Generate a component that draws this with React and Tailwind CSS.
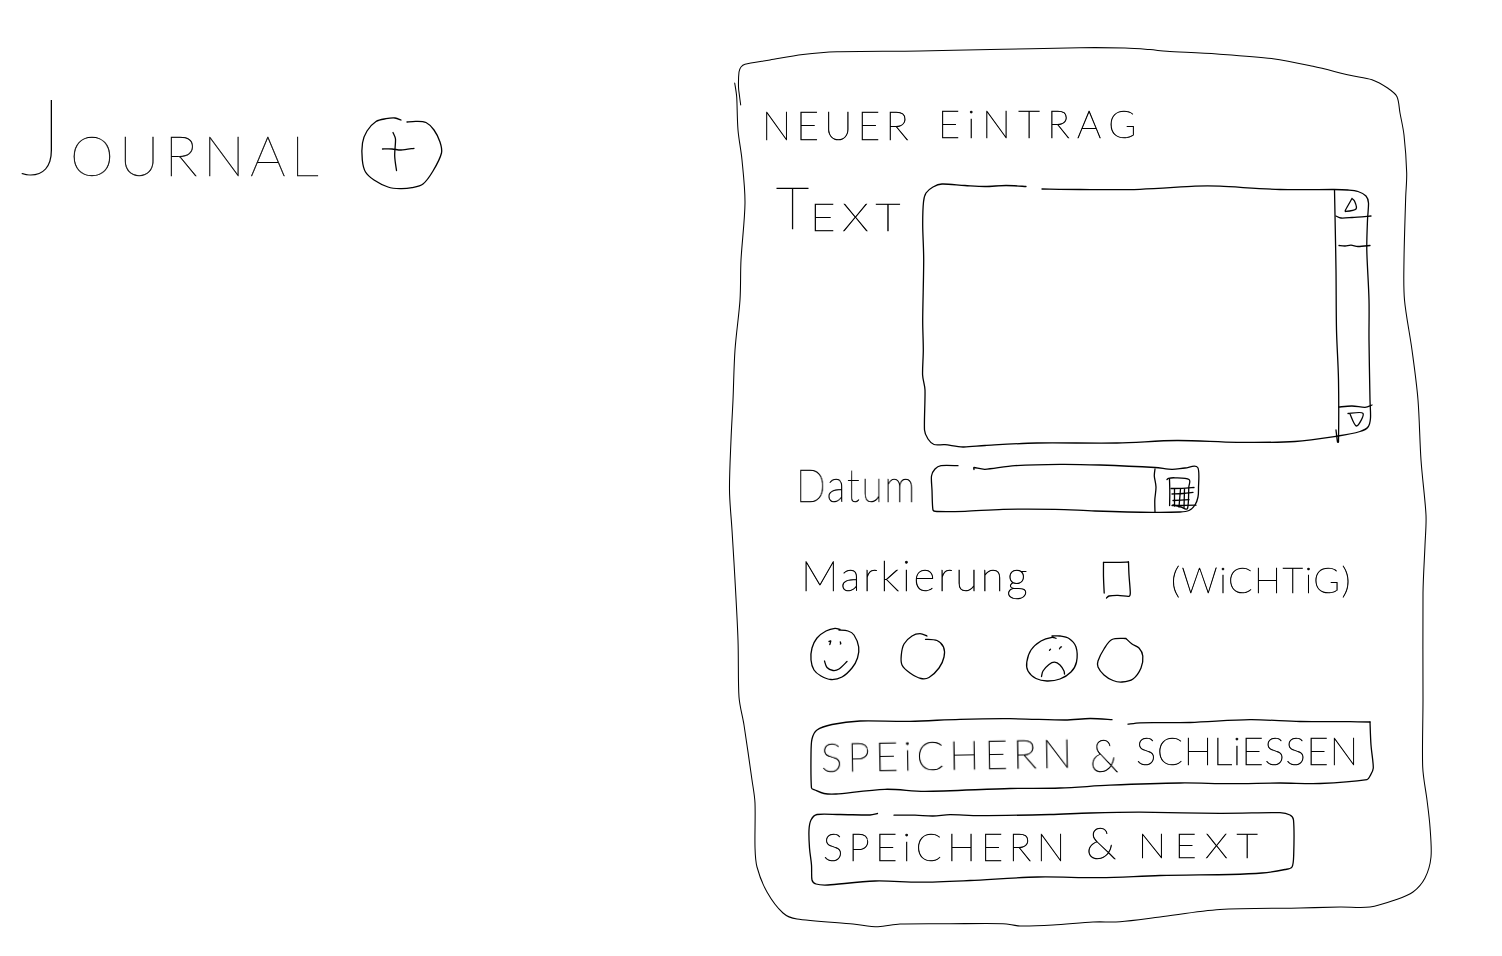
import React from "react";

/* Turns a list of points into a smooth pen line (Catmull-Rom to Bezier). */
function smooth(points) {
  const p = points.trim().split(/\s+/).map((s) => s.split(",").map(Number));
  let d = `M${p[0][0]} ${p[0][1]}`;
  for (let i = 0; i < p.length - 1; i++) {
    const a = p[i - 1] || p[i];
    const b = p[i];
    const c = p[i + 1];
    const e = p[i + 2] || c;
    /* handles never reach past the middle of the segment, so corners stay crisp */
    const len = Math.hypot(c[0] - b[0], c[1] - b[1]);
    const h1 = Math.hypot(c[0] - a[0], c[1] - a[1]) || 1;
    const h2 = Math.hypot(e[0] - b[0], e[1] - b[1]) || 1;
    const k1 = Math.min(1 / 6, (len * 0.33) / h1);
    const k2 = Math.min(1 / 6, (len * 0.33) / h2);
    d += `C${b[0] + (c[0] - a[0]) * k1} ${b[1] + (c[1] - a[1]) * k1} ${c[0] - (e[0] - b[0]) * k2} ${c[1] - (e[1] - b[1]) * k2} ${c[0]} ${c[1]}`;
  }
  return d;
}

function Sketch({ box, lines, width = 1.3, className }) {
  return (
    <svg viewBox={box} className={className} fill="none" stroke="#000" strokeWidth={width} strokeLinecap="round" strokeLinejoin="round" aria-hidden="true">
      {lines.map((l, i) => (
        <path key={i} d={smooth(l)} />
      ))}
    </svg>
  );
}

function Word({ as: Tag = "span", className, children }) {
  return <Tag className={`block shrink-0 origin-left whitespace-nowrap leading-none will-change-transform ${className}`}>{children}</Tag>;
}

const panelFrame = [
  "740.7,105 739.5,96 738.5,87 739,72 741,67 745,64.3 770,60 803,54.5 837,51.7 920,50.9 1003,49.3 1080,47.7 1125,48 1150,49.6 1167,51.3 1217,54 1273,58.7 1313,66.3 1350,75.3 1372,79.7 1388,88.3 1397,96.7 1400,113 1404,135 1406.7,173 1405.7,197 1404,260 1404.5,300 1412,350 1418,400 1421,460 1426,515 1425,545 1423,593 1423,700 1422.7,767 1427,800 1430,827 1431,857 1425,878 1413,892 1395,900 1370,907 1340,907 1300,908 1220,909.5 1160,917 1120,921.7 1093,922 1053,925 1020,926 1003,923.7 950,923.7 900,924 878,926.7 853,924 797,919 783,913 767,892 757,867 755,847 755,803 752,780 744,725 739,697 738,640 735,580 732,530 729.5,490 731,440 733,400 735,350 740,300 741,260 745,203 742,160 738,130 736.7,97 734.7,83",
];

const textFrame = [
  "1026,186.5 1006,185.5 985,186.5 965,185.5 942,184 933,187 926,193 923.5,202 922.7,225 923.7,260 922.7,320 923.3,350 922.6,375 925,390 924.5,430 928,439 934,444.5 945,444.7 963,447 985,445.5 1037,443 1117,443 1177,440.5 1237,442.3 1295,441.5 1338,436 1360,431.5 1368,427 1370.5,418 1370,400 1369,340 1369,300 1366.8,250 1367.5,220 1368.5,203 1366,196 1358,191.5 1348,190 1334,189.5 1280,189.5 1220,186.2 1195,186.2 1140,189.3 1080,189.5 1042,189",
  "1334.5,190 1335,215 1336,270 1336.5,330 1338.5,380 1338.5,442 1337.5,442 1336,430",
  "1336,216 1341,218 1352,217.5 1371,216",
  "1339,245.5 1345,246 1351,245.2 1358,246.5 1370,245.5",
  "1339,407 1352,406 1365,407.3 1372,405",
];

const arrows = [
  "1352,198.5 1345.5,210 1345.5,211.5 1356,209 1354.5,201 1352,198.5",
  "1348,413.5 1363,413.3 1356.5,426 1350,414",
];

const dateFrame = [
  "958,465.7 941,465.7 935,469 931.5,476 932,490 933,510 937,511.5 965,511.3 1003,509.3 1055,509.3 1095,511 1152,512.4 1180,512 1189,510.5 1195,505 1198,497 1198.5,488 1197.7,467.5 1185,468 1172,469.3 1155,467.5 1100,465 1060,464.3 1015,465.7 985,469.3 974,467.5 974,469.5",
  "1155,469 1154.3,476 1156,487 1154.8,500 1155,512",
];

const calendar = [
  "1167,479.5 1168.5,478.3 1175,477.8 1189,479.5 1188.8,487 1187.5,508.5 1181,507 1173,505",
  "1169.5,479 1169.8,492 1169.6,505.5",
  "1171,488.5 1182,488.3 1194,487.5",
  "1172,494 1183,493.5 1193,492.3",
  "1173,500.5 1189,499.7",
  "1172,505.5 1196,505.2",
  "1174.5,489 1174.5,506",
  "1180.5,489 1179,507",
  "1184.5,489 1184,507.5",
];

const checkbox = ["1104.2,593 1103.5,577 1103.5,562.3", "1103.5,562.3 1116,562.4 1128.5,562", "1128.5,562 1129,575 1130.3,593 1129,596.3 1118,595.3 1109,596 1106.5,598"];

const happy = [
  "840,629.5 835,628.3 826,631 817,638 812,648 811,660 814,670 821,676 831,679.5 842,677 852,668 857.5,658 858.7,647 854,635 848,631 839,630",
  "829,641.5 830.8,641 829.8,644.5",
  "840.3,641.8 840.8,643.8 840.3,644",
  "824.5,661 827,667.5 833,670.5 839,669 847,661.5",
];

const radioOne = ["927,636 920,633.7 912,636 904,644 901.3,655 902,665 910,673 921,678.5 929,677.5 939,668 944,657 943.5,647 937,640.5 925.5,639.3"];

const sad = [
  "1056,638.3 1052,637.3 1041,641 1031,650 1026.8,662 1028,671 1036,678.5 1047,681 1060,679 1071,672 1076.5,662 1076,647 1069,638.5 1060,636 1052,636",
  "1049.5,650.2 1050.5,649.3",
  "1059.5,648.8 1060.5,647.2 1061.5,646.8",
  "1041.5,676.5 1043,671 1049,664.5 1054.5,662.2 1060,665 1064,671 1064.5,674",
];

const radioTwo = ["1126,638.5 1112,639.5 1104,649 1098,661 1098,667 1104,675 1113,680.5 1122,682 1133,679 1141,668 1142.8,656 1139,648 1132,644 1126,638.5"];

const saveCloseFrame = [
  "1112,719.6 1090,718.5 1065,720 1010,718.7 960,719.3 910,721.3 860,721 832,724.5 817,730 812,739 811,755 811.5,788 815,790 824,793.5 836,794 885,789.3 925,791.3 1010,788.5 1060,788 1110,785.2 1180,783 1230,783.6 1280,783 1320,783.5 1367,779.7 1370,776 1373.3,768 1371,745 1370,722",
  "1370,722 1350,721.7 1300,721.5 1250,719.7 1190,722.5 1140,722.8 1128,724.2",
];

const saveNextFrame = [
  "877.5,813.5 870,815 840,814.5 817,814.5 811,820 809,830 809.5,848 811.5,865 812,880 816,884 828,885 875,881 920,882.2 970,880.5 1038,877 1100,877.7 1160,875.5 1230,874.5 1262,873 1285,869.5 1292,867 1293.7,855 1293.5,820 1290,815 1280,812.7 1220,813.3 1140,812.2 1090,813 1050,814.5 980,815.7 950,814.7 933,816 915,815.2 894,815.2",
];

export default function App() {
  return (
    <main className="flex h-[956px] w-[1502px] overflow-hidden bg-white font-['Lato',sans-serif] font-thin text-black [-webkit-text-stroke:0.6px_#000]">
      <section className="flex h-full w-[728px] items-start pl-[20px]">
        <h1 className="flex items-start">
          <Word className="mt-[80px] w-[50px] text-[107px] [-webkit-text-stroke-width:0px]">J</Word>
          <Word className="mt-[127px] w-[288px] text-[56px] tracking-[5.2px] [-webkit-text-stroke-width:0.4px]">OURNAL</Word>
        </h1>
        <button type="button" aria-label="Plus" className="mt-[114px]">
          <Sketch
            box="358 114 88 78"
            className="block h-[78px] w-[88px]"
            lines={[
              "401,120 395,118 386,118.7 376,121.5 367,131 362.5,143 362.3,160 365.5,172 374,180 388,187 400,188.7 412,187.7 423,184 433,171 441.5,153 440,142 434,130 426,122.5 416,121.3 407,122",
              "393,132.5 395.5,139 394.7,156 396.5,170.5",
              "382.5,149 392,149 401,150 414,148.3",
            ]}
          />
        </button>
      </section>

      <section className="mt-[46px] grid h-[882px] w-[706px] shrink-0">
        <Sketch box="728 46 706 882" width={1.05} className="h-[882px] w-[706px] [grid-area:1/1]" lines={panelFrame} />

        <form className="flex flex-col pt-[54px] [grid-area:1/1]">
          <h2 className="flex h-[80px] items-start pl-[34px]">
            <Word className="mt-[6px] w-[176px] text-[39px] tracking-[5.2px]">NEUER</Word>
            <Word className="mt-[4px] text-[38px] tracking-[7.4px]">EiNTRAG</Word>
          </h2>

          <div className="flex h-[270px] items-start pl-[48px]">
            <label className="flex w-[144px] items-start">
              <Word className="-mt-[2px] w-[34px] text-[58px]">T</Word>
              <Word className="mt-[17px] scale-x-[1.15] text-[38px] tracking-[6px]">EXT</Word>
            </label>
            <div className="grid">
              <Sketch box="920 180 456 270" className="h-[270px] w-[456px] [grid-area:1/1]" lines={textFrame} />
              <Sketch box="920 180 456 270" className="h-[270px] w-[456px] [grid-area:1/1]" lines={arrows} />
            </div>
          </div>

          <div className="flex h-[80px] items-start pl-[68px]">
            <Word as="label" className="mt-[12px] w-[132px] scale-x-[0.85] text-[46px] tracking-[2px]">Datum</Word>
            <div className="grid">
              <Sketch box="928 450 276 80" className="h-[80px] w-[276px] [grid-area:1/1]" lines={dateFrame} />
              <Sketch box="928 450 276 80" className="h-[80px] w-[276px] [grid-area:1/1]" lines={calendar} />
            </div>
          </div>

          <div className="flex h-[95px] items-start pl-[73px]">
            <Word as="label" className="mt-[24px] w-[299px] text-[42px] tracking-[2.8px]">Markierung</Word>
            <Sketch box="1100 555 34 48" className="mt-[25px] h-[48px] w-[34px]" lines={checkbox} />
            <Word className="ml-[37px] mt-[31px] text-[36px] tracking-[1.6px]">(WiCHTiG)</Word>
          </div>

          <div className="flex h-[90px] items-start pl-[80px]">
            <Sketch box="808 625 54 60" className="h-[60px] w-[54px]" lines={happy} />
            <Sketch box="898 625 50 60" className="ml-[36px] h-[60px] w-[50px]" lines={radioOne} />
            <Sketch box="1023 625 57 60" className="ml-[75px] h-[60px] w-[57px]" lines={sad} />
            <Sketch box="1095 625 51 60" className="ml-[15px] h-[60px] w-[51px]" lines={radioTwo} />
          </div>

          <button type="button" className="ml-[80px] grid h-[85px] w-[568px] text-left">
            <Sketch box="808 715 568 85" className="h-[85px] w-[568px] [grid-area:1/1]" lines={saveCloseFrame} />
            <span className="flex items-start pl-[13px] [grid-area:1/1]">
              <Word className="mt-[22px] w-[269px] -rotate-1 text-[40px] tracking-[5.3px]">SPEiCHERN</Word>
              <Word className="mt-[17px] w-[46px] scale-x-90 text-[46px]">&amp;</Word>
              <Word className="mt-[16px] text-[38px] tracking-[0.9px]">SCHLiESSEN</Word>
            </span>
          </button>

          <button type="button" className="ml-[80px] grid h-[95px] w-[490px] text-left">
            <Sketch box="808 800 490 95" className="h-[95px] w-[490px] [grid-area:1/1]" lines={saveNextFrame} />
            <span className="flex items-start pl-[15px] [grid-area:1/1]">
              <Word className="mt-[27px] w-[263px] text-[38px] tracking-[5.5px]">SPEiCHERN</Word>
              <Word className="mt-[20px] w-[52px] text-[44px]">&amp;</Word>
              <Word className="mt-[28px] scale-x-110 text-[34px] tracking-[8px]">NEXT</Word>
            </span>
          </button>
        </form>
      </section>
    </main>
  );
}
